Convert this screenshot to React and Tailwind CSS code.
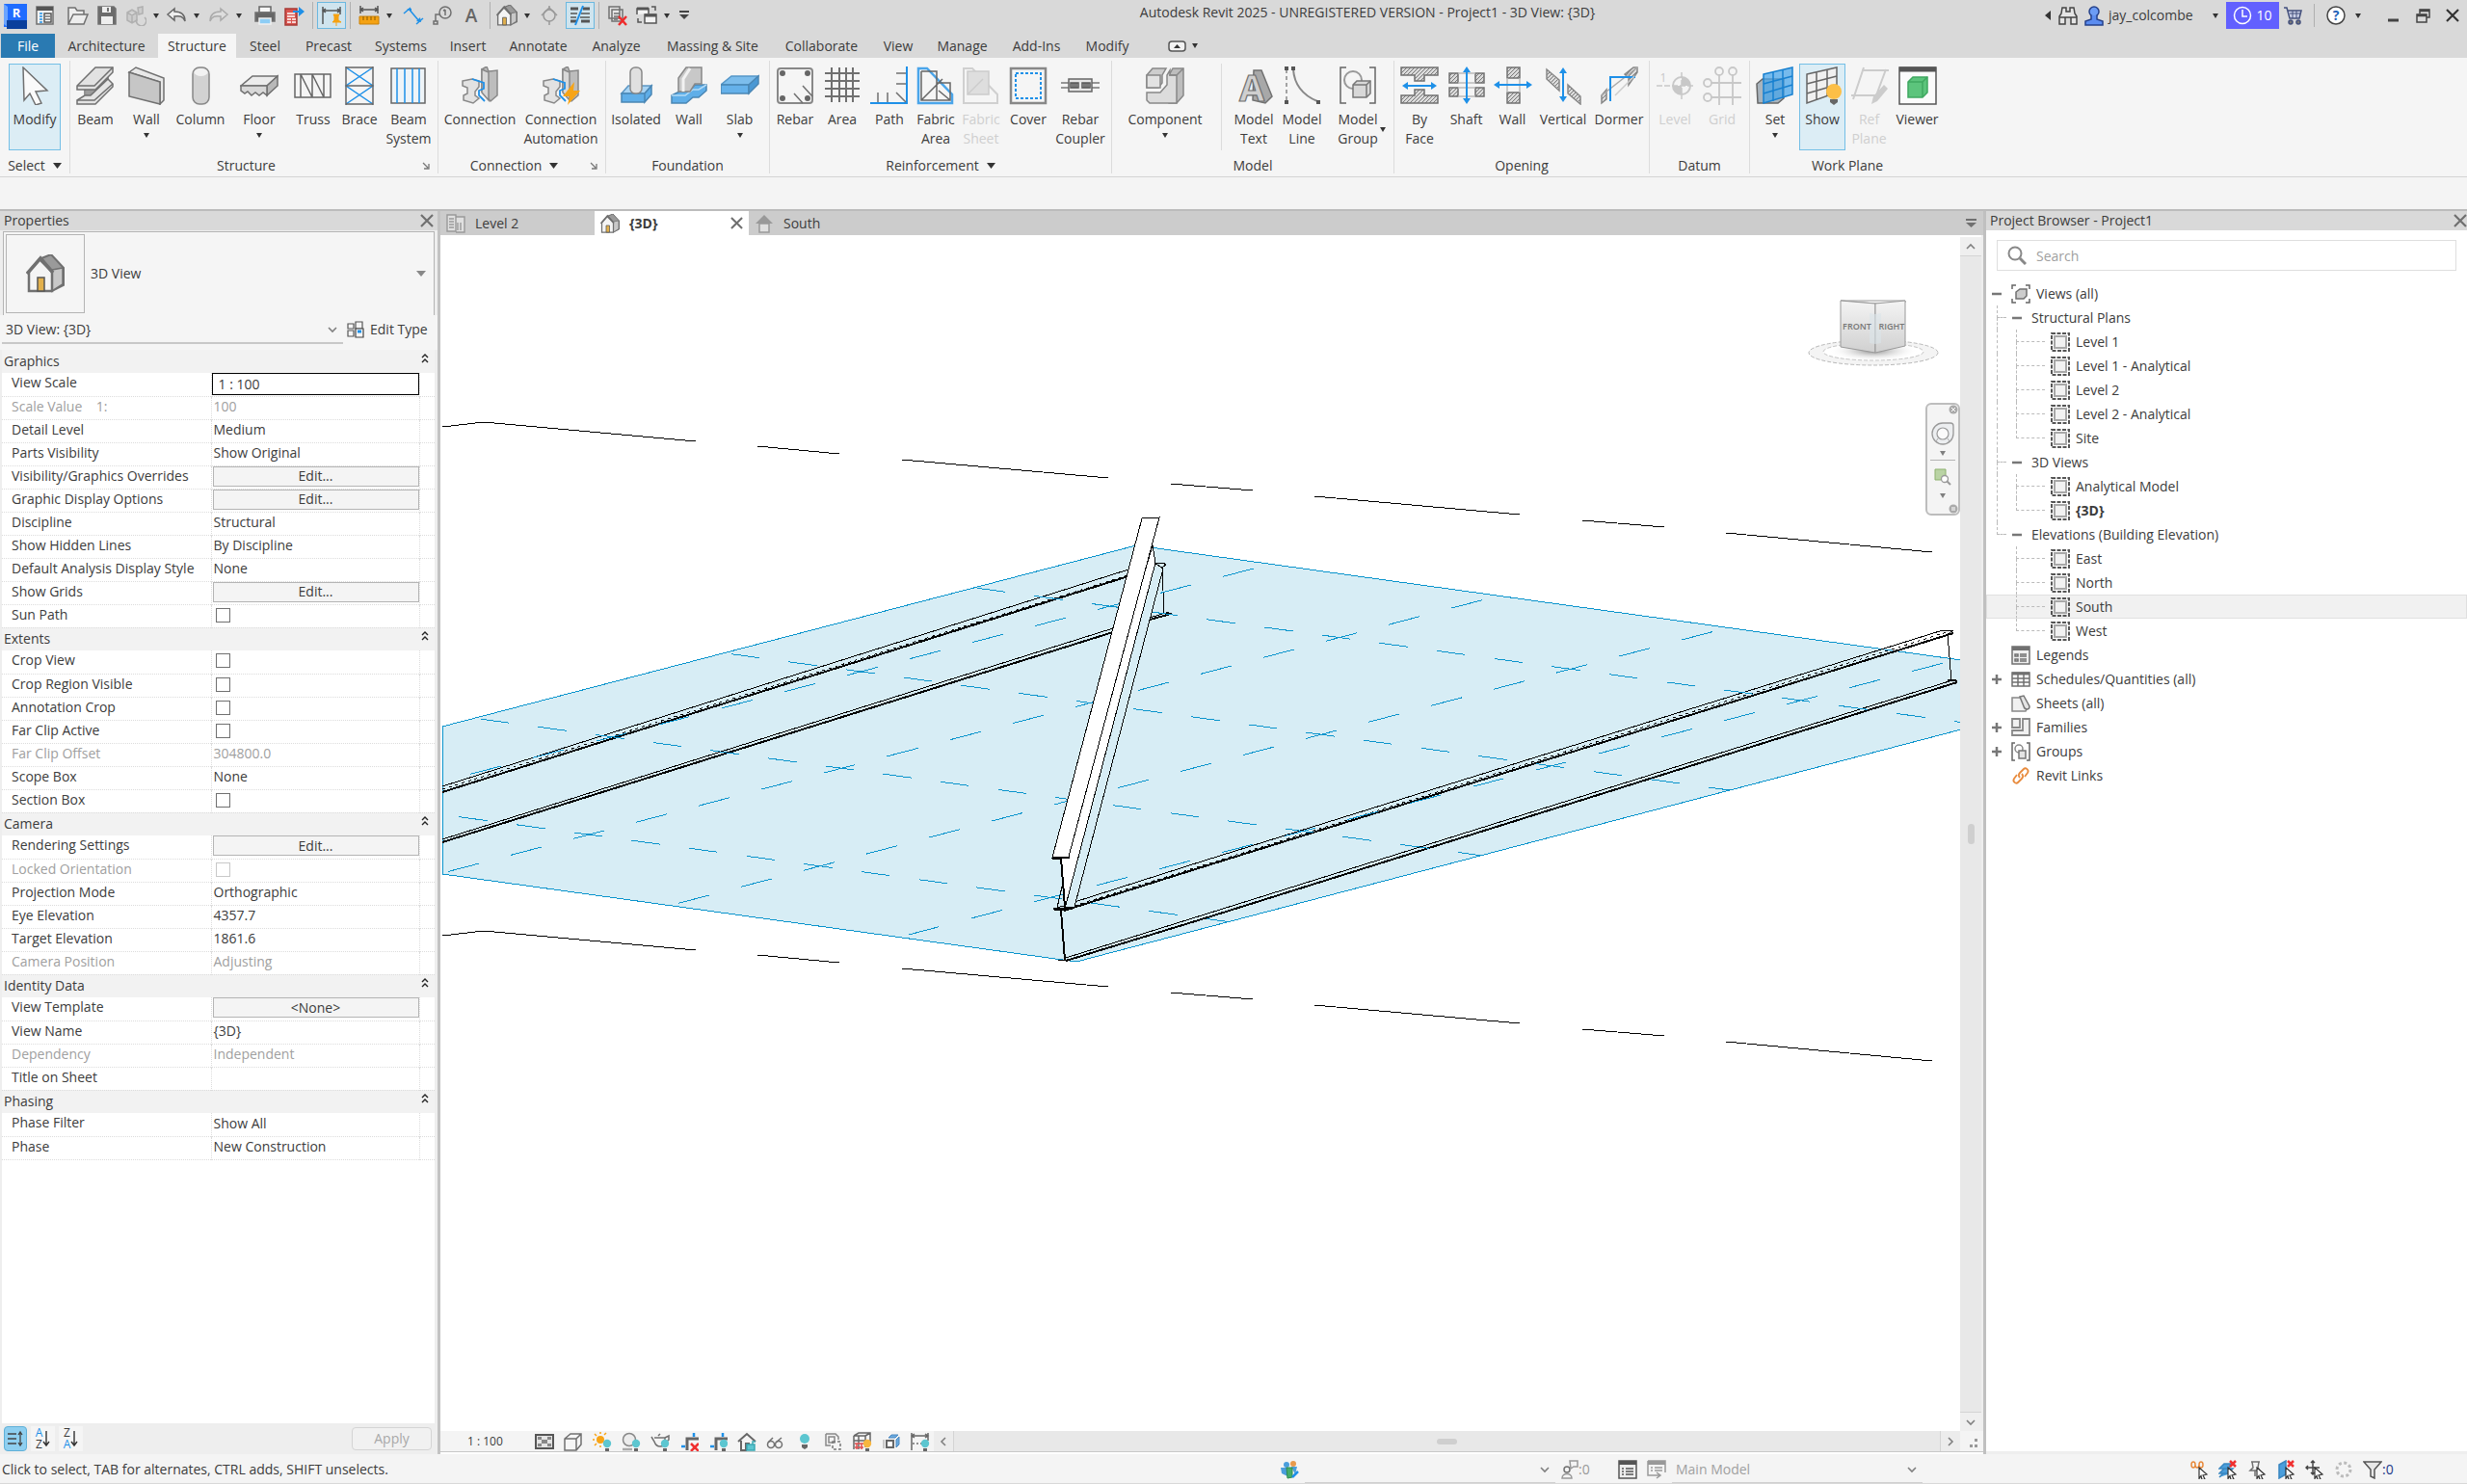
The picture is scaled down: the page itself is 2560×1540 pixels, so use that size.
import { useState } from 'react'
import clsx from 'clsx'

const G = '#707070'
const B = '#1e90e8'

function Ico({ w = 20, h = w, vb, children, className }) {
  return (
    <svg
      width={w}
      height={h}
      viewBox={vb || `0 0 ${w} ${h}`}
      fill="none"
      stroke={G}
      strokeWidth="1.5"
      className={clsx('block shrink-0', className)}
      aria-hidden="true"
    >
      {children}
    </svg>
  )
}

function Caret({ big, className }) {
  return (
    <Ico w={big ? 9 : 6} h={big ? 6 : 5} className={className}>
      {big ? <path d="M0 0h9L4.500 6z" fill="#333" stroke="none" /> : <path d="M0 0h6L3 5z" fill="#333" stroke="none" />}
    </Ico>
  )
}

function Cross({ size = 14 }) {
  return (
    <Ico w={size} vb="0 0 14 14">
      <path d="M1 1l12 12M13 1L1 13" stroke="#707070" strokeWidth="2.2" />
    </Ico>
  )
}

function Chevron({ d = 'M1 1l4 4 4-4' }) {
  return (
    <Ico w={10} h={10} vb="0 -2 10 10">
      <path d={d} stroke="#808080" strokeWidth="1.6" />
    </Ico>
  )
}

function House({ size = 22 }) {
  return (
    <Ico w={size} vb="0 0 40 40">
      <path d="M16 4L26 0 39 14v18l-12 6V18z" fill="#9a9a9a" strokeWidth="2" />
      <path d="M27 16l11-2v17l-11 7z" fill="#c8c8c8" strokeWidth="1.500" />
      <path d="M3 38V18L14 5l13 13v20z" fill="#f4f4f4" strokeWidth="2.500" />
      <path d="M1 20L15 4l13 15" strokeWidth="3.500" />
      <path d="M12 38V24h7v14z" fill="#e2b04c" stroke="#555" strokeWidth="1.500" />
    </Ico>
  )
}

function Bulb({ x = 13, y = 11, c = '#5cc6d0' }) {
  return (
    <g stroke="none">
      <circle cx={x} cy={y} r="4.200" fill={c} />
      <path d={`M${x - 2} ${y + 5}h4v3l-2 1-2-1z`} fill="#666" />
    </g>
  )
}

/* ---------- quick access toolbar ---------- */

const Q = {
  doc: <><path d="M2 2h17v18H2z" fill="#f2f2f2" /><path d="M2 4h17" strokeWidth="4" stroke="#555" /><path d="M5 9h3M5 12h3M5 15h3M5 18h3" stroke={B} /><path d="M10 9h7v9h-7z" fill="#fff" stroke="#555" /><path d="M11 12h5M11 15h5" /></>,
  open: <path d="M1 20V3h7l2 3h7v4M1 20L6 10h15l-4 10z" fill="#ededed" />,
  save: <><path d="M2 2h16l2 2v16H2z" fill="#6b6b6b" /><path d="M6 2h9v6H6zM5 12h12v8H5z" fill="#eee" stroke="none" /><path d="M12 3v4" strokeWidth="2" /></>,
  sync: <g stroke="#b0b0b0" fill="#ccc"><path d="M2 8l5-3 5 3v8l-5 3-5-3zM2 8l5 3 5-3M7 11v8" /><path d="M13 3l5-1v7l-4 1z" /><path d="M12 15a5 5 0 108-2" fill="none" /></g>,
  undo: <path d="M9 4L2 10l7 6v-4c6-1 9 0 11 5 0-7-4-10-11-10z" fill="#eee" stroke="#666" />,
  redo: <path d="M13 4l7 6-7 6v-4C7 11 4 12 2 17c0-7 4-10 11-10z" fill="#ddd" stroke="#aaa" />,
  print: <><path d="M5 2h12v6H5z" fill="#f6f6f6" stroke="#666" /><path d="M1 8h20v9H1z" fill="#666" /><path d="M5 14h12v6H5z" fill="#8dcdf5" stroke="#f0f0f0" /></>,
  pdf: <><path d="M2 4h12v17H2z" fill="#d9544f" stroke="#a83a36" /><path d="M4 9h8M4 12h8M4 15h4m1 0h4M4 18h4m1 0h4" stroke="#fff" /><path d="M10 6h6V2l6 5-6 5V8h-6z" fill={B} stroke="none" /></>,
  pin: <><path d="M2 2v18M20 2v8M2 6h18M5 4L2 6l3 2M17 4l3 2-3 2" stroke="#555" /><path d="M13 10h6l-1 2v4l3 2h-9l2-2v-4zM16 18v4" fill="#f5a213" stroke="#f5a213" strokeWidth="1" /></>,
  ruler: <><path d="M2 1v8M20 1v8M2 5h18M5 3L2 5l3 2M17 3l3 2-3 2" stroke="#555" /><path d="M1 12h20v8H1z" fill="#f5a213" stroke="#c98108" strokeWidth="1" /><path d="M5 12v4M9 12v4M13 12v4M17 12v4" stroke="#8a5a00" strokeWidth="1" /></>,
  align: <><path d="M6 4l11 13M1 9l7-6M14 20l7-6" stroke={B} /><path d="M4 4h5v3zM14 17l5 1-1-5z" fill={B} stroke="none" /></>,
  tag: <><circle cx="14" cy="8" r="6" /><path d="M14 5v6M12 6l2-1M8 10H4v7M2 17h4v3H2z" /></>,
  text: <text x="11" y="18" textAnchor="middle" fontSize="19" fontWeight="600" fill="#666" stroke="none" fontFamily="Open Sans, sans-serif">A</text>,
  section: <><path d="M11 1v20" stroke="#999" /><circle cx="11" cy="11" r="6" fill="#d9d9d9" stroke="#999" /><path d="M3 11l8-8 8 8" stroke="#999" /></>,
  thin: <><path d="M1 4h8M14 4h7M1 17h6M12 17h9" stroke="#555" strokeWidth="3" /><path d="M1 9h7M12 9h9M1 13h6M11 13h10" stroke="#555" /><path d="M14 1L6 21" stroke={B} strokeWidth="2" /></>,
  closeHidden: <><path d="M2 2h11v12H2zM5 5h11v12H5z" fill="#e6e6e6" /><path d="M7 9h6M7 12h6M7 15h4" /><path d="M12 12l8 9M20 12l-8 9" stroke="#ee2b2b" strokeWidth="2.500" /></>,
  switchWin: <><path d="M1 10V4h12v5M9 10h12v9H9z" fill="#f3f3f3" stroke="#555" /><path d="M1 4h12M9 11h12" stroke="#555" strokeWidth="3" /><path d="M16 2h4v4M6 18H2v-4" stroke="#555" /></>,
}

const QAT = [
  ['doc', 'New', 'ml-2'], ['open', 'Open', 'ml-3'], ['save', 'Save', 'ml-2'], ['sync', 'Synchronize', 'ml-2', 1],
  ['undo', 'Undo', 'ml-1', 1], ['redo', 'Redo', 'ml-1.5', 1], ['print', 'Print', 'ml-2.5'], ['pdf', 'Export PDF', 'ml-2'], ['sep', 's1', 'ml-2'],
  ['pin', 'Activate Dimensions', 'ml-1', 0, 1], ['sep', 's2', 'ml-1'], ['ruler', 'Measure', 'ml-2', 1], ['align', 'Aligned Dimension', 'ml-2'],
  ['tag', 'Tag by Category', 'ml-2'], ['text', 'Text', 'ml-2'], ['sep', 's3', 'ml-2'], ['house', 'Default 3D View', 'ml-1.5', 1],
  ['section', 'Section', 'ml-1.5'], ['thin', 'Thin Lines', 'ml-1.5', 0, 1], ['sep', 's4', 'ml-1'], ['closeHidden', 'Close Inactive Views', 'ml-2'],
  ['switchWin', 'Switch Windows', 'ml-2', 1],
]

function TitleBar() {
  return (
    <header className="flex h-[35px] items-start bg-[#d9d9d9]">
      <div className="flex h-8 items-center">
        <button aria-label="Revit home" className="ml-1">
          <Ico w={24} h={28}>
            <path d="M0 2h24v24H0z" fill="#1f6cff" stroke="none" />
            <path d="M0 2l4 3v21l-4-3z" fill="#6ba4ff" stroke="none" />
            <path d="M3 19h21v9H3z" fill="#0a3f9c" stroke="none" />
            <text x="13" y="16" textAnchor="middle" fontSize="13" fontWeight="700" fill="#fff" stroke="none" fontFamily="Open Sans, sans-serif">R</text>
          </Ico>
        </button>
        {QAT.map(([id, label, gap, menu, on]) =>
          id === 'sep' ? (
            <span key={label} className={clsx('h-7 w-px bg-[#b0b0b0]', gap)} />
          ) : (
            <span key={label} className={clsx('flex items-center', gap)}>
              <button aria-label={label} className={clsx(on && 'border border-[#6bb8e0] bg-[#cfe4ee] px-[3px] py-[2px]')}>
                {id === 'house' ? <House /> : <Ico w={22}>{Q[id]}</Ico>}
              </button>
              {menu ? <button aria-label={`${label} options`} className="ml-1 flex w-3 justify-center"><Caret /></button> : null}
            </span>
          )
        )}
        <button aria-label="Customize" className="ml-1.5">
          <Ico w={12} h={10}><path d="M1 1h10" stroke="#444" strokeWidth="2" /><path d="M1 4h10L6 9z" fill="#444" stroke="none" /></Ico>
        </button>
      </div>

      <h1 className="flex-1 pt-[3px] text-center text-sm leading-5">Autodesk Revit 2025 - UNREGISTERED VERSION - Project1 - 3D View: {'{3D}'}</h1>

      <div className="flex h-8 items-center">
        <button aria-label="Collapse search"><Ico w={6} h={10}><path d="M6 0v10L0 5z" fill="#333" stroke="none" /></Ico></button>
        <button aria-label="Search" className="ml-2">
          <Ico w={20}><path d="M3 8l1-6h4v4h4V2h4l1 6 2 3v8h-6v-7H7v7H1v-8zM1 12h6M13 12h6" fill="#e4e4e4" stroke="#444" /></Ico>
        </button>
        <button className="ml-1.5 flex items-center gap-1 text-sm">
          <Ico w={22}><circle cx="11" cy="7" r="5" fill="#6c9cf5" stroke="#25408a" /><path d="M8 11v4l-6 2v4h18v-4l-6-2v-4" fill="#5b8cf0" stroke="#25408a" /></Ico>
          <span className="w-[104px] text-left">jay_colcombe</span>
          <Caret />
        </button>
        <button className="ml-2 flex h-7 w-[55px] items-center justify-center gap-1 bg-[#6260ff] text-sm text-white">
          <Ico w={20}><circle cx="10" cy="10" r="8.500" stroke="#fff" /><path d="M10 4v7h5" stroke="#fff" /></Ico>
          10
        </button>
        <button aria-label="App store" className="ml-1">
          <Ico w={20}><path d="M1 2h3l3 11h10l2-8H5" fill="#c9cfe6" stroke="#44507c" /><path d="M7 8h11M10 5v8M14 5v8" stroke="#44507c" strokeWidth="1" /><circle cx="8" cy="17" r="2" fill="#777" stroke="#44507c" /><circle cx="16" cy="17" r="2" fill="#777" stroke="#44507c" /></Ico>
        </button>
        <span className="ml-3 h-6 w-px bg-[#b0b0b0]" />
        <button aria-label="Help" className="ml-3">
          <Ico w={20}><circle cx="10" cy="10" r="9" fill="#fff" stroke="#444" /><text x="10" y="15" textAnchor="middle" fontSize="14" fontWeight="700" fill="#2563b8" stroke="none">?</text></Ico>
        </button>
        <Caret className="ml-2.5" />
        <button aria-label="Minimize" className="ml-7"><Ico w={11} h={14}><path d="M0 12h11" stroke="#444" strokeWidth="3" /></Ico></button>
        <button aria-label="Restore" className="ml-[18px]"><Ico w={15}><path d="M4 5V1h10v8h-3M1 6h10v8H1z" stroke="#444" /><path d="M4 2h10M1 7h10" stroke="#444" strokeWidth="2.500" /></Ico></button>
        <button aria-label="Close" className="mr-2 ml-4"><Ico w={14}><path d="M1 1l12 12M13 1L1 13" stroke="#333" strokeWidth="2.200" /></Ico></button>
      </div>
    </header>
  )
}

/* ---------- ribbon ---------- */

const TABS = [
  ['Architecture', 'w-[107px]'], ['Structure', 'w-[81px]'], ['Steel', 'w-[60px]'], ['Precast', 'w-[72px]'], ['Systems', 'w-[78px]'],
  ['Insert', 'w-[61px]'], ['Annotate', 'w-[85px]'], ['Analyze', 'w-[77px]'], ['Massing & Site', 'w-[123px]'], ['Collaborate', 'w-[103px]'],
  ['View', 'w-[56px]'], ['Manage', 'w-[77px]'], ['Add-Ins', 'w-[77px]'], ['Modify', 'w-[70px]'],
]

const H = 'url(#hatch)'

const R = {
  modify: <path d="M8 1l25 24-12 1 6 12-6 2-6-12-6 7z" fill="#fafafa" />,
  beam: <><path d="M9 29V20l20-17h4v10L15 33z" fill="#9c9c9c" /><path d="M20 1h18v5L20 24H1v-4z" fill="#e2e2e2" /><path d="M1 20h18L38 1" /><path d="M10 25v7M15 25v6" stroke="#999" /><path d="M15 30L33 13l5 5v3L20 39H1v-4l8-5z" fill="#e4e4e4" /><path d="M1 35h18l19-17" /></>,
  wall: <><path d="M2 6l7-5 29 11v23l-4 4V16z" fill="#e8e8e8" /><path d="M2 6v25l32 8V16z" fill="#c6c6c6" /></>,
  column: <><rect x="12" y="1" width="17" height="38" rx="7" fill="#d2d2d2" stroke="#888" /><ellipse cx="20.500" cy="6" rx="7" ry="4" fill="#f2f2f2" stroke="none" /></>,
  floor: <><path d="M1 20l12-10h26L28 20z" fill="#ececec" /><path d="M28 20l11-10v10L28 30z" fill="#b8b8b8" /><path d="M1 20h27v10l-4-3-4 3-4-3-4 3-4-4-3 2-4-3z" fill="#d8d8d8" /></>,
  truss: <path d="M1 8h37v24H1zM7 8v24M7 8l12 24V8l12 24V8" stroke="#666" />,
  brace: <><path d="M6 1l28 19L6 39M34 1L6 20l28 19" stroke={B} /><path d="M6 0v40M34 0v40M6 1h28M6 20h28M6 39h28" stroke="#666" /></>,
  beamSystem: <><path d="M2 2h35v36H2z" fill="#eef4f8" stroke="#666" /><path d="M8 2v36M16 2v36M24 2v36M31 2v36" stroke={B} /></>,
  connection: <><path d="M22 3l5-3 2 5 9-1v26l-7 6-9-10z" fill="#bdbdbd" stroke="#888" /><path d="M22 3v24l7 8V6z" fill="#d8d8d8" stroke="#888" /><path d="M2 15l10-2 7 2v6l-4 5v4l4 3-6 5-10-3v-5l4-2v-6l-5-2z" fill="#e2e2e2" stroke="#888" /><path d="M12 13l12 4v6l-5 2v5l6 6" stroke={B} strokeWidth="1.800" /></>,
  isolated: <><path d="M5 28l7-8h24l-7 8z" fill="#a8d4f4" stroke="#5c97c4" /><path d="M5 28h24v9H5zM29 28l7-8v9l-7 8z" fill="#5faee8" stroke="#4a86b4" /><rect x="14" y="1" width="12" height="27" rx="5" fill="#e0e0e0" stroke="#888" /></>,
  wallFound: <><path d="M2 30l8-4h10l6-7h12v6l-8 7h-6l-7 6H2z" fill="#5faee8" stroke="#4a86b4" /><path d="M2 30h14l8-6h6l8-5" stroke="#b4dbf6" /><path d="M9 26V12l8-11h16v17h-7l-5 8z" fill="#c8c8c8" stroke="#888" /><path d="M14 26V13l7-11" stroke="#f2f2f2" strokeWidth="3" /></>,
  slab: <><path d="M0 19l11-9h28l-10 9z" fill="#7cbdec" stroke="#5597c8" /><path d="M0 19h29v9H0z" fill="#65b1ea" stroke="#4a86b4" /><path d="M29 19l10-9v8L29 28z" fill="#4a98d4" stroke="#4a86b4" /></>,
  rebar: <><rect x="2" y="2" width="36" height="36" rx="3" stroke="#888" strokeWidth="2" /><g fill="#666" stroke="none"><circle cx="7" cy="7" r="3" /><circle cx="33" cy="7" r="3" /><circle cx="7" cy="33" r="3" /><circle cx="33" cy="33" r="3" /></g><path d="M19 28l9 10M28 20l10 11" /></>,
  area: <path d="M9 1v36M17 1v36M24 1v36M31 1v36M2 7h36M2 15h36M2 23h36M2 31h36" strokeWidth="2" />,
  path: <><path d="M38 0v39M0 38h38" stroke={B} strokeWidth="2" /><path d="M27 7h10M27 18h10M8 27v10M18 27v10M27 27l10 10" /></>,
  fabric: <><path d="M2 2h9l26 27v9H2z" stroke="#4aa5ea" strokeWidth="2.500" /><path d="M5 5v30h30V17h-14M5 5h16v12M5 35l22-22M21 17v18M23 25l12 10" stroke="#666" /></>,
  sheet: <><path d="M2 2h9l26 27v9H2z" stroke="#d0d0d0" strokeWidth="2" /><path d="M6 5h22v24H6z" fill="#dedede" stroke="#ccc" /><path d="M6 29l16-16" stroke="#ccc" /></>,
  cover: <><path d="M2 2h36v36H2z" stroke="#888" strokeWidth="2.500" /><path d="M7 7h26v26H7z" stroke={B} strokeWidth="2" strokeDasharray="3 2" /></>,
  coupler: <><path d="M0 17h40M0 22h40" stroke="#777" /><path d="M8 13h24v13H8z" fill="#e6e6e6" stroke="#666" /><path d="M10 17h8v5h-8zM22 17h8v5h-8zM12 17v5M14 17v5M16 17v5M24 17v5M26 17v5M28 17v5" stroke="#555" /></>,
  component: (
    <>
      <path d="M1 9l6-7h14l-4 7v8L13 22H1z" fill="#cdcdcd" stroke="#888" />
      <path d="M1 9h14v13H1z" fill="#e2e2e2" stroke="#888" />
      <path d="M24 9l4-7h11v28l-7 8h-8z" fill="#bdbdbd" stroke="#888" />
      <path d="M1 27h14l7-8V9l3-5v5h7v29H4l-3-3z" fill="#dcdcdc" stroke="#888" />
      <path d="M32 9l7-7M24 9h8" stroke="#888" />
    </>
  ),
  modelText: (
    <>
      <path d="M20 4h8l11 27-7 7-13-3z" fill="#a8a8a8" stroke="#707070" />
      <text x="18" y="36" textAnchor="middle" fontSize="38" fontWeight="700" fill="#cfcfcf" stroke="#707070" strokeWidth="1.200" fontFamily="Open Sans, sans-serif">A</text>
    </>
  ),
  modelLine: <><path d="M4 3v33" strokeDasharray="4 3" stroke="#888" /><path d="M11 3c1 14 8 26 25 33" stroke="#888" strokeWidth="2" /><path d="M2 0h4v4H2zM9 0h4v4H9zM2 35h4v4H2zM35 35h4v4h-4z" fill="#555" stroke="none" /></>,
  modelGroup: <><path d="M8 1H2v37h6M32 1h6v37h-6" stroke="#666" /><circle cx="15" cy="14" r="9" stroke="#999" strokeWidth="2" /><path d="M15 19l4-4h14v13l-4 4H15z" fill="#d8d8d8" stroke="#777" /><path d="M15 19h14v13M29 19l4-4" stroke="#777" /></>,
  byFace: <><path d="M1 1h38v8H25v6H15V9H1zM1 38h38v-8H25v-6H15v6H1z" fill={H} /><path d="M7 20h26" stroke={B} strokeWidth="2" /><path d="M2 20l6-4v8zM38 20l-6-4v8z" fill={B} stroke="none" /></>,
  shaft: <><path d="M2 7h9v10H2zM29 7h9v10h-9zM2 22h9v9H2zM29 22h9v9h-9z" fill={H} /><path d="M11 7h18M11 17h18M11 22h18M11 31h18" stroke="#bbb" /><path d="M20 3v34" stroke={B} strokeWidth="2" /><path d="M20 0l-4 6h8zM20 39l-4-6h8z" fill={B} stroke="none" /></>,
  wallOpen: <><path d="M14 1h13v11H14zM14 27h13v11H14z" fill={H} /><path d="M14 12v15M27 12v15" stroke="#bbb" /><path d="M4 19h32" stroke={B} strokeWidth="2" /><path d="M0 19l6-4v8zM40 19l-6-4v8z" fill={B} stroke="none" /></>,
  vertical: <><path d="M3 3l13 11v11L3 13zM25 19l13 12v8L25 28z" fill={H} stroke="#888" /><path d="M20 4v30" stroke={B} strokeWidth="2" /><path d="M20 1l-4 6h8zM20 37l-4-6h8z" fill={B} stroke="none" /></>,
  dormer: <><path d="M2 38v-8l5-6v10zM26 8l9-7h4v5L30 19v-7z" fill={H} stroke="#888" /><path d="M39 1L2 30" stroke="#aaa" /><path d="M11 36V11h26" stroke={B} strokeWidth="2" /><path d="M16 30L36 10" stroke="#ccc" /></>,
  level: <g stroke="#c8c8c8"><circle cx="27" cy="20" r="9" strokeWidth="2" /><path d="M27 11v9h9a9 9 0 00-9-9zM27 29v-9h-9a9 9 0 009 9z" fill="#c8c8c8" stroke="none" /><path d="M27 6v28M1 20h38" strokeDasharray="6 2" /><text x="8" y="16" textAnchor="middle" fontSize="12" fill="#c8c8c8" stroke="none">1</text></g>,
  grid: <g stroke="#c8c8c8" strokeWidth="1.800"><circle cx="17" cy="5" r="4" /><circle cx="31" cy="5" r="4" /><circle cx="5" cy="17" r="4" /><circle cx="5" cy="32" r="4" /><path d="M17 9v31M31 9v31M9 17h31M9 32h31" /></g>,
  set: <><path d="M1 18l6-5h22v20l-6 5H2z" fill="#a9b4bd" stroke="#666" /><path d="M8 8L38 1v28L8 38z" fill="#4aa5ea" fillOpacity=".75" stroke="#1780d0" /><path d="M18 6v30M28 3v30M8 18l30-8M8 28l30-9" stroke="#1780d0" /></>,
  show: <><path d="M4 8L35 1v26L4 38zM14 5v30M25 3v27M4 18l31-8M4 28l31-9" stroke="#666" fill="#f0f0f0" /><circle cx="32" cy="26" r="8" fill="#fcbf47" stroke="none" /><path d="M28 34h8v3l-4 3-4-3z" fill="#666" stroke="none" /></>,
  refPlane: <><path d="M12 4h28M1 30h26M14 1L3 34M37 3L27 30" stroke="#ccc" strokeWidth="2" /><path d="M22 39l2-8 11-12 4 4-11 13z" fill="#ccc" stroke="none" /></>,
  viewer: <><path d="M1 1h38v38H1z" fill="#fbfbfb" stroke="#555" /><path d="M1 3h38" stroke="#555" strokeWidth="5" /><path d="M10 16l5-5h15v16l-5 5H10z" fill="#5cc47c" stroke="#3fa860" /><path d="M10 16h15v16M25 16l5-5" stroke="#3fa860" /></>,
}

R.connAuto = <>{R.connection}<path d="M34 16L22 31h7l-2 9 13-15h-7z" fill="#f7a416" stroke="none" /></>

// [title, panel width, buttons, has menu, has dialog launcher]
// button: [icon, label, width, arrow, state]
const PANELS = [
  ['Structure', 'w-[382px]', [['beam', 'Beam', 'w-[50px]'], ['wall', 'Wall', 'w-[56px]', 1], ['column', 'Column', 'w-[56px]'], ['floor', 'Floor', 'w-[66px]', 1], ['truss', 'Truss', 'w-[46px]'], ['brace', 'Brace', 'w-[50px]'], ['beamSystem', 'Beam\nSystem', 'w-[52px]']], 0, 1],
  ['Connection', 'w-[174px]', [['connection', 'Connection', 'w-[84px]'], ['connAuto', 'Connection\nAutomation', 'w-[84px]']], 1, 1],
  ['Foundation', 'w-[170px]', [['isolated', 'Isolated', 'w-[60px]'], ['wallFound', 'Wall', 'w-[50px]'], ['slab', 'Slab', 'w-[55px]', 1]]],
  ['Reinforcement', 'w-[355px]', [['rebar', 'Rebar', 'w-[50px]'], ['area', 'Area', 'w-[48px]'], ['path', 'Path', 'w-[50px]'], ['fabric', 'Fabric\nArea', 'w-[46px]'], ['sheet', 'Fabric\nSheet', 'w-[48px]', 0, 'off'], ['cover', 'Cover', 'w-[50px]'], ['coupler', 'Rebar\nCoupler', 'w-[58px]']], 1],
  ['Model', 'w-[293px]', [['component', 'Component', 'w-[108px]', 1], ['sep'], ['modelText', 'Model\nText', 'w-[50px]'], ['modelLine', 'Model\nLine', 'w-[50px]'], ['modelGroup', 'Model\nGroup', 'w-[66px]', 2]]],
  ['Opening', 'w-[265px]', [['byFace', 'By\nFace', 'w-[50px]'], ['shaft', 'Shaft', 'w-[47px]'], ['wallOpen', 'Wall', 'w-[49px]'], ['vertical', 'Vertical', 'w-[56px]'], ['dormer', 'Dormer', 'w-[60px]']]],
  ['Datum', 'w-[104px]', [['level', 'Level', 'w-[50px]', 0, 'off'], ['grid', 'Grid', 'w-[48px]', 0, 'off']]],
  ['Work Plane', 'w-[202px]', [['set', 'Set', 'w-[50px]', 1], ['show', 'Show', 'w-[48px]', 0, 'on'], ['refPlane', 'Ref\nPlane', 'w-[49px]', 0, 'off'], ['viewer', 'Viewer', 'w-[51px]']]],
]

function RibbonButton({ item }) {
  const [icon, label, width, arrow, state] = item
  return (
    <button
      disabled={state === 'off'}
      className={clsx(
        'flex h-[90px] shrink-0 flex-col items-center border pt-[2px] text-sm leading-5 whitespace-pre',
        width,
        state === 'on' ? 'border-[#74bfe6] bg-[#dcedf5]' : 'border-transparent',
        state === 'off' && 'text-[#cfcfcf]'
      )}
    >
      <Ico w={40}>{R[icon]}</Ico>
      <span className="flex items-center pt-[5px]">
        {arrow === 2 ? <span className="w-2" /> : null}
        {label}
        {arrow === 2 ? <Caret className="ml-0.5" /> : null}
      </span>
      {arrow === 1 ? <Caret className="mt-1" /> : null}
    </button>
  )
}

function Ribbon() {
  const [tab, setTab] = useState('Structure')
  return (
    <>
      <svg className="absolute h-0 w-0" aria-hidden="true">
        <pattern id="hatch" width="4" height="4" patternUnits="userSpaceOnUse">
          <path d="M0 0h4v4H0z" fill="#dadada" />
          <path d="M0 4l4-4" stroke="#777" strokeWidth="1" />
        </pattern>
      </svg>
      <nav className="flex h-[25px] bg-[#d9d9d9] text-sm">
        <button className="ml-px w-14 bg-[#2a7ab2] text-white">File</button>
        {TABS.map(([name, width]) => (
          <button key={name} onClick={() => setTab(name)} className={clsx('whitespace-nowrap', width, tab === name && 'bg-[#f5f5f5]')}>
            {name}
          </button>
        ))}
        <button aria-label="Minimize ribbon" className="ml-7 flex items-center gap-1.5">
          <Ico w={19} h={12}><rect x="1" y="1" width="17" height="10" rx="3" fill="#f2f2f2" stroke="#555" /><path d="M6 8h7L9.500 4z" fill="#333" stroke="none" /></Ico>
          <Caret />
        </button>
      </nav>
      <section className="flex h-[124px] border-b border-[#d4d4d4] bg-[#f5f5f5] text-sm">
        <Panel title="Select" width="w-[73px]" menu>
          <span className="w-2" />
          <RibbonButton item={['modify', 'Modify', 'w-[54px]', 0, 'on']} />
        </Panel>
        {PANELS.map(([title, width, items, menu, launcher]) => (
          <Panel key={title} title={title} width={width} menu={menu} launcher={launcher}>
            {items.map((it, i) =>
              it[0] === 'sep' ? <span key={i} className="mr-2 ml-1 w-px bg-[#dcdcdc]" /> : <RibbonButton key={i} item={it} />
            )}
          </Panel>
        ))}
      </section>
      <div className="h-[35px] shrink-0 border-b-2 border-[#bcbcbc] bg-[#f4f4f4]" />
    </>
  )
}

function Panel({ title, width, menu, launcher, children }) {
  return (
    <div className={clsx('my-[3px] flex shrink-0 flex-col border-[#dcdcdc] pt-[3px]', width, title !== 'Work Plane' && 'border-r')}>
      <div className="flex h-[90px] pl-px">{children}</div>
      <div className="flex flex-1 items-center pt-1.5">
        <span className="flex flex-1 items-center justify-center gap-2">
          {title}
          {menu ? <Caret big /> : null}
        </span>
        {launcher ? (
          <button aria-label={`${title} settings`} className="w-4">
            <Ico w={8}><path d="M1 1l5 5M7 2v5H2" stroke="#777" strokeWidth="1.300" /></Ico>
          </button>
        ) : null}
      </div>
    </div>
  )
}

/* ---------- properties palette ---------- */

const PROPS = [
  ['Graphics', [
    ['View Scale', '1 : 100', 'input'], ['Scale Value    1:', '100', 'off'], ['Detail Level', 'Medium'], ['Parts Visibility', 'Show Original'],
    ['Visibility/Graphics Overrides', 'Edit...', 'button'], ['Graphic Display Options', 'Edit...', 'button'], ['Discipline', 'Structural'],
    ['Show Hidden Lines', 'By Discipline'], ['Default Analysis Display Style', 'None'], ['Show Grids', 'Edit...', 'button'], ['Sun Path', '', 'check'],
  ]],
  ['Extents', [
    ['Crop View', '', 'check'], ['Crop Region Visible', '', 'check'], ['Annotation Crop', '', 'check'], ['Far Clip Active', '', 'check'],
    ['Far Clip Offset', '304800.0', 'off'], ['Scope Box', 'None'], ['Section Box', '', 'check'],
  ]],
  ['Camera', [
    ['Rendering Settings', 'Edit...', 'button'], ['Locked Orientation', '', 'checkOff'], ['Projection Mode', 'Orthographic'],
    ['Eye Elevation', '4357.7'], ['Target Elevation', '1861.6'], ['Camera Position', 'Adjusting', 'off'],
  ]],
  ['Identity Data', [
    ['View Template', '<None>', 'button'], ['View Name', '{3D}'], ['Dependency', 'Independent', 'off'], ['Title on Sheet', ''],
  ]],
  ['Phasing', [['Phase Filter', 'Show All'], ['Phase', 'New Construction']]],
]

function PropRow({ name, value, kind }) {
  const id = name.toLowerCase().replace(/[^a-z]+/g, '-')
  const off = kind === 'off' || kind === 'checkOff'
  return (
    <tr className={clsx('h-6 border-b border-dotted border-[#dcdcdc]', off && 'text-[#a0a0a0]')}>
      <th scope="row" className="border-r border-dotted border-[#dcdcdc] p-0 pb-[3px] pl-2.5 text-left font-normal whitespace-pre">
        <label htmlFor={id}>{name}</label>
      </th>
      <td className={clsx('border-r border-dotted border-[#dcdcdc] p-0', kind !== 'input' && 'pb-0.5')}>
        {kind === 'input' && <input id={id} defaultValue={value} className="block h-[23px] w-full border border-black bg-white px-1.5" />}
        {kind === 'button' && (
          <button id={id} className="mx-px block h-[21px] w-[214px] border border-[#b4b4b4] bg-[#f4f4f4] leading-4">{value}</button>
        )}
        {(kind === 'check' || kind === 'checkOff') && (
          <input
            id={id}
            type="checkbox"
            disabled={off}
            className={clsx('ml-1 block size-[15px] appearance-none border bg-white checked:bg-[#5aa9d6]', off ? 'border-[#c8c8c8]' : 'border-[#707070]')}
          />
        )}
        {(!kind || kind === 'off') && <output id={id} className="block pl-0.5">{value}</output>}
      </td>
      <td className="p-0" />
    </tr>
  )
}

function Properties() {
  return (
    <aside className="flex w-[457px] shrink-0 flex-col border-r-3 border-[#c3c3c3] bg-[#eeeeee]">
      <div className="flex h-5 items-center justify-between bg-[#d9d9d9] pr-1 pl-1 text-sm">
        <h2>Properties</h2>
        <button aria-label="Close properties"><Cross /></button>
      </div>
      <button className="mx-[3px] mt-px flex h-[87px] items-center border border-b-0 border-[#b4b4b4] bg-[#f5f5f5] pr-2 pl-0.5 text-sm">
        <span className="grid size-[82px] place-items-center border border-[#b4b4b4]"><House size={40} /></span>
        <span className="flex-1 pl-1.5 text-left">3D View</span>
        <Ico w={10} h={6}><path d="M0 0h10L5 6z" fill="#888" stroke="none" /></Ico>
      </button>
      <div className="flex h-[36px] items-start bg-[#f5f5f5] text-sm">
        <div className="ml-0.5 flex h-[30px] w-[354px] items-center border-b-2 border-[#c8c8c8] pt-0.5 pr-1.5">
          <select aria-label="Instance" className="flex-1 appearance-none bg-transparent pl-1">
            <option>3D View: {'{3D}'}</option>
          </select>
          <Chevron />
        </div>
        <button className="ml-1 flex h-[30px] items-center gap-1.5">
          <Ico w={18}><path d="M1 3h6v5H1zM9 1h7v7H9zM1 10h6v6H1z" fill="#f5f5f5" stroke="#555" strokeWidth="1.200" /><path d="M9 8h8v9H9z" fill="#f5f5f5" stroke="#444" strokeWidth="1.200" /><path d="M11 11h4" stroke={B} strokeWidth="3" /></Ico>
          Edit Type
        </button>
      </div>
      <div className="mr-[3px] ml-0.5 flex-1 overflow-hidden bg-white">
        <table className="w-full table-fixed border-collapse text-sm leading-5">
          <colgroup>
            <col className="w-[217px]" />
            <col className="w-[216px]" />
            <col />
          </colgroup>
          {PROPS.map(([group, rows]) => (
            <tbody key={group}>
              <tr className="h-6 bg-[#f2f2f2]">
                <th colSpan={2} scope="rowgroup" className="p-0 pl-0.5 text-left font-normal">{group}</th>
                <td className="p-0">
                  <button aria-label={`Collapse ${group}`} className="ml-0.5 block">
                    <Ico w={8} h={12} className="mb-1.5"><path d="M1 5l3-3 3 3M1 10l3-3 3 3" stroke="#222" strokeWidth="1.400" /></Ico>
                  </button>
                </td>
              </tr>
              {rows.map(([name, value, kind]) => <PropRow key={name} name={name} value={value} kind={kind} />)}
            </tbody>
          ))}
        </table>
      </div>
      <div className="flex h-8 items-center gap-1 pl-1 text-xs">
        <button aria-label="Sort by group" className="grid h-[26px] w-6 place-items-center rounded border border-[#5fb0d8] bg-[#8ecff0]">
          <Ico w={18}><path d="M1 4h9M1 9h9M1 14h9M14 2v14M12 5l2-3 2 3M12 13l2 3 2-3" stroke="#444" strokeWidth="1.300" /></Ico>
        </button>
        {['AZ', 'ZA'].map(k => (
          <button key={k} aria-label={`Sort ${k}`} className="flex h-[26px] w-[25px] items-center justify-center bg-[#f5f5f5] leading-3">
            <span className="flex flex-col">
              <span className={k === 'AZ' ? 'text-[#1e90e8]' : ''}>{k[0]}</span>
              <span className={k === 'ZA' ? 'text-[#1e90e8]' : ''}>{k[1]}</span>
            </span>
            <Ico w={8} h={18}><path d="M4 1v15M1 12l3 4 3-4" stroke="#333" strokeWidth="1.400" /></Ico>
          </button>
        ))}
        <button disabled className="mr-1.5 ml-auto h-6 w-[83px] rounded border border-[#d4d4d4] bg-[#f1f1f1] text-sm text-[#a8a8a8]">Apply</button>
      </div>
    </aside>
  )
}

/* ---------- drawing area ---------- */

const PLANE = '459,754 1179,566 2035,685 2035,757 1117,998 459,907'
const CROSS_A = [[1148, 628.6], [893, 697], [633, 764.5], [610.5, 866]]
const CROSS_B = [[893, 697], [1130, 729.8], [1369, 762.7], [1607.7, 795.4]]

function Model() {
  return (
    <svg viewBox="457 244 1577 1241" preserveAspectRatio="xMidYMid slice" className="block h-full w-full" shapeRendering="crispEdges" fill="none">
      <clipPath id="plane"><polygon points={PLANE} /></clipPath>
      {[0, 528].map(dy => (
        <path
          key={dy}
          transform={`translate(0 ${dy})`}
          stroke="#000"
          d="M459 443L502 438L722 458M786 463L871 471M936 477L1150 496M1215 502L1300 509M1364 515L1577 534M1642 540L1727 547M1791 553L2005 573"
        />
      ))}
      <polygon points={PLANE} fill="#d7edf5" stroke="#0a94cc" />

      <g stroke="#000">
        <path d="M459 816L1171 591" />
        <path d="M459 819L1180 594" strokeDasharray="3 4" />
        <path d="M459 822L1171 598" strokeWidth="2" />
        <path d="M459 871L1155 652M1193 641L1213 635" />
        <path d="M459 874L1155 656M1193 643L1215 637" strokeWidth="2" />
        <path d="M1198 584h9l3 2-4 3h-7zM1206 590L1208 636M1202 636h14" />
      </g>

      <g stroke="#000">
        <path d="M1112 937L1250 893L2016 654h11l-4 3" />
        <path d="M1108 942L2020 656" strokeDasharray="3 4" />
        <path d="M1104 945L1250 899L2027 657" strokeWidth="2" />
        <path d="M1106 994L1250 949L2026 706" />
        <path d="M1106 997L1250 953L2031 708" strokeWidth="2" />
        <path d="M2021 657L2025 707" />
        <path d="M2021 706h8l2 2" strokeWidth="2" />
      </g>

      <g stroke="#0a94cc" clipPath="url(#plane)">
        {CROSS_A.map(([x, y]) => (
          <path key={y} d={`M${x - 1207.85} ${y - 164.8}L${x + 1500} ${y + 204.6}`} strokeDasharray="29.8 30.4" />
        ))}
        {CROSS_B.map(([x, y]) => (
          <path key={y} d={`M${x - 1316} ${y + 345.6}L${x + 1300} ${y - 341.3}`} strokeDasharray="33 34.3" />
        ))}
      </g>

      <g stroke="#000">
        <path d="M1101 945L1105 996" strokeWidth="2" />
        <path d="M1094 944h13l8-4h-13zM1098 996h12" />
        <path d="M1093 943h20" strokeWidth="2" />
        <path d="M1198 584L1207 590L1115 941L1105 942z" fill="#d7edf5" />
        <path d="M1196 566L1199 584L1105 943L1101 891z" fill="#fff" />
        <path d="M1103 916L1097 942" />
        <path d="M1185 538L1203 537L1109 889L1092 890z" fill="#fff" />
        <path d="M1092 891L1110 890M1101 891L1105 941" strokeWidth="2" />
      </g>
    </svg>
  )
}

function ViewCube() {
  return (
    <svg width="140" height="80" viewBox="0 0 140 80" className="absolute top-[62px] right-[18px]" role="img" aria-label="View cube">
      <defs>
        <radialGradient id="shade"><stop offset="0" stopColor="#8a8a8a" /><stop offset="1" stopColor="#fff" stopOpacity="0" /></radialGradient>
        <linearGradient id="face" x2="0" y2="1"><stop offset="0" stopColor="#f4f4f4" /><stop offset="1" stopColor="#d0d0d0" /></linearGradient>
      </defs>
      <ellipse cx="68" cy="60" rx="67" ry="13" fill="#f4f4f4" stroke="#b8b8b8" strokeDasharray="4 2" />
      <ellipse cx="68" cy="59" rx="52" ry="9" fill="#fff" stroke="#c4c4c4" strokeDasharray="4 2" />
      <ellipse cx="68" cy="58" rx="46" ry="11" fill="url(#shade)" />
      <path d="M34 6h67v2L70 9z" fill="#f8f8f8" stroke="#999" />
      <path d="M34 6l36 3v51l-36-6z" fill="url(#face)" stroke="#999" />
      <path d="M101 6L70 9v51l31-7z" fill="url(#face)" stroke="#999" />
      <path d="M64 19l6 1 6-1v31l-6 1-6-1z" fill="#dbe4ea" opacity=".6" />
      <g fontSize="9" fontWeight="600" fill="#777" textAnchor="middle">
        <text x="51" y="36">FRONT</text>
        <text x="87" y="36">RIGHT</text>
      </g>
    </svg>
  )
}

function NavBar() {
  return (
    <div className="absolute top-[174px] right-0 flex h-[117px] w-9 flex-col items-center rounded-md border-2 border-[#bdbdbd] bg-[#f4f4f4]">
      <button aria-label="Close navigation bar" className="self-end"><Ico w={10}><circle cx="5" cy="5" r="4.500" fill="#aaa" stroke="none" /><path d="M3 3l4 4M7 3L3 7" stroke="#fff" strokeWidth="1" /></Ico></button>
      <button aria-label="Steering wheel" className="mt-2"><Ico w={24}><path d="M12 1h8q3 0 3 3v8a11 11 0 11-11-11z" fill="#eceef0" stroke="#999" strokeWidth="1.300" /><circle cx="12" cy="12" r="6" fill="#fafafa" stroke="#999" strokeWidth="1.200" /><path d="M7 17l-2 3M17 17l2 3" stroke="#aaa" strokeWidth="1" /></Ico></button>
      <Caret className="mt-1.5 opacity-60" />
      <span className="mt-1 h-px w-[26px] shrink-0 bg-[#b4b4b4]" />
      <button aria-label="Zoom" className="mt-2"><Ico w={18}><path d="M1 1h11v11H1z" fill="#b9d3a4" stroke="#8db16f" strokeWidth="1" /><circle cx="11" cy="11" r="3.500" fill="#fff" stroke="#999" strokeWidth="1.300" /><path d="M13 13l4 4" stroke="#999" strokeWidth="2" /></Ico></button>
      <Caret className="mt-2 opacity-60" />
      <button aria-label="Customize" className="mt-auto self-end"><Ico w={10}><circle cx="5" cy="5" r="4.500" fill="#aaa" stroke="none" /><path d="M3 4h4M3 6h4" stroke="#fff" strokeWidth="1" /></Ico></button>
    </div>
  )
}

const crop = <><path d="M2 15h4M15 1v4" stroke={B} strokeWidth="2.500" /><path d="M8 19V7h12" stroke="#666" strokeWidth="3" /></>

const VIEW_TOOLS = [
  ['Detail level', <><path d="M1 3h18v14H1z" fill="#e4e4e4" stroke="#555" strokeWidth="2" /><path d="M3 5h4v3H3zM13 5h4v3h-4zM7 8h6v4H7zM3 12h4v3H3zM13 12h4v3h-4z" fill="#888" stroke="none" /></>],
  ['Visual style', <path d="M1 7l6-5h11v11l-5 6H1zM1 7h12v12M13 7l5-5" fill="#f6f6f6" />],
  ['Sun path', <><circle cx="8" cy="8" r="4" fill="#f7a416" stroke="none" /><path d="M8 0v2M2 2l2 2M0 8h2M2 14l2-2M8 14v2M12 3l2-2" stroke="#f7a416" /><Bulb x={15} y={12} /></>],
  ['Shadows', <><circle cx="8" cy="8" r="6.500" fill="#ececec" stroke="#888" /><path d="M1 18h10" stroke="#aaa" strokeWidth="2.500" /><Bulb x={15} y={12} /></>],
  ['Rendering', <><path d="M4 6h11v4c0 4-2 5-5 5s-5-2-6-5L1 5M8 4l2-2M15 6l4-2v4l-4 4" /><Bulb x={15} y={12} /></>],
  ['Crop view', <>{crop}<path d="M12 12l8 8M20 12l-8 8" stroke="#f03030" strokeWidth="2.500" /></>],
  ['Crop region', <>{crop}<Bulb x={16} y={12} /></>],
  ['Lock view', <><path d="M1 10l9-8 9 8M4 9v10h5v-7h4" stroke="#666" strokeWidth="2" /><path d="M10 13h8v6h-8z" fill="#5cc6d0" stroke="#3aa9b4" /><path d="M16 13v-3h3" stroke="#3aa9b4" /></>],
  ['Temporary hide', <><circle cx="5" cy="13" r="3.500" /><circle cx="13" cy="13" r="3.500" /><path d="M2 11l5-5M10 11l6-5" /></>],
  ['Reveal hidden', <><circle cx="10" cy="7" r="5" fill="#5cc6d0" stroke="none" /><path d="M7 13h6v3l-3 2-3-2z" fill="#666" stroke="none" /></>],
  ['Temporary properties', <><path d="M2 2h10l3 3v3M2 2v12h5M5 5h6v6H5z" stroke="#888" /><path d="M9 10h8v8H9z" strokeDasharray="3 2" stroke="#777" /></>],
  ['Analytical model', <><path d="M1 4l5-3h12v10M1 4h12v12M1 4v14M6 4v14M1 9h12M13 4l5-3" stroke="#666" /><path d="M2 12h9M2 16h9M4 12v6M9 12v6" stroke="#e05050" /><Bulb x={15} y={12} c="#f8b63f" /></>],
  ['Displacement', <><path d="M7 6l3-3h7l-3 3zM15 8l3-3v8l-3 3z" fill="#6aaae0" stroke="#4c88bf" strokeWidth="1" /><path d="M5 9h7v7H5z" fill="#fff" stroke="#666" strokeWidth="2" /><path d="M2 8v9" stroke="#bbb" /></>],
  ['Constraints', <><path d="M1 1v18M18 1v8M1 4h17M4 2L1 4l3 2M15 2l3 2-3 2" stroke="#666" /><path d="M2 12h9" strokeDasharray="2 2" /><Bulb x={15} y={12} /></>],
]

function ViewArea() {
  return (
    <main className="flex min-w-0 flex-1 flex-col bg-white">
      <div className="flex h-[25px] items-center bg-[#cccccc] text-sm">
        <button className="flex h-full w-40 items-center gap-2.5 pl-1.5 text-left">
          <Ico w={20}><path d="M1 1h9v17H1zM10 3h9v16H10M3 5h5M3 8h5M3 11h5M3 14h5M12 9v8M15 9v8" stroke="#999" strokeWidth="1.400" fill="#e0e0e0" /></Ico>
          Level 2
        </button>
        <div className="flex h-full w-40 items-center bg-white pr-1.5 pl-1.5">
          <button className="flex flex-1 items-center gap-2.5 font-bold"><House size={20} />{'{3D}'}</button>
          <button aria-label="Close view"><Cross size={13} /></button>
        </div>
        <button className="flex h-full items-center gap-2.5 pl-1.5">
          <Ico w={20}><path d="M1 10l9-9 9 9z" fill="#999" stroke="none" /><path d="M5 10h10v9H5z" fill="#e0e0e0" stroke="#999" /></Ico>
          South
        </button>
        <button aria-label="Tab list" className="mr-[7px] ml-auto"><Ico w={11} h={10}><path d="M0 1h11" strokeWidth="2" /><path d="M0 4h11L5.500 9z" fill={G} stroke="none" /></Ico></button>
      </div>

      <div className="flex min-h-0 flex-1">
        <div className="relative min-w-0 flex-1 overflow-hidden">
          <Model />
          <ViewCube />
          <NavBar />
        </div>
        <div className="mt-0.5 flex w-[22px] flex-col items-center bg-[#e8e8e8]">
          <button aria-label="Scroll up" className="grid h-5 w-full place-items-center border-b border-[#d4d4d4] bg-[#efefef]"><Chevron d="M1 5l4-4 4 4" /></button>
          <span className="flex flex-1 items-center"><span className="h-[21px] w-[7px] rounded bg-[#cfcfcf]" /></span>
          <button aria-label="Scroll down" className="grid h-5 w-full place-items-center border-t border-[#d4d4d4] bg-[#efefef]"><Chevron /></button>
        </div>
        <div className="w-0.5 bg-[#eeeeee]" />
      </div>

      <div className="mb-0.5 flex h-[22px] items-center border-b border-[#c8c8c8] bg-[#f4f4f4] text-xs">
        <button className="w-[98px] shrink-0 pl-7 text-left">1 : 100</button>
        <div className="flex shrink-0 gap-2.5">
          {VIEW_TOOLS.map(([label, art]) => (
            <button key={label} aria-label={label}><Ico w={20}>{art}</Ico></button>
          ))}
        </div>
        <button aria-label="Scroll left" className="ml-1 grid h-full w-5 place-items-center bg-[#ececec]"><Chevron d="M7 -1L3 3l4 4" /></button>
        <span className="flex h-full flex-1 items-center justify-center border-x border-[#d4d4d4] bg-[#e8e8e8]"><span className="h-1.5 w-[21px] rounded-sm bg-[#cfcfcf]" /></span>
        <button aria-label="Scroll right" className="grid h-full w-5 place-items-center bg-[#ececec]"><Chevron d="M3 -1l4 4-4 4" /></button>
        <Ico w={24} h={20}><path d="M15 7h3v3h-3zM10 13h3v3h-3zM15 13h3v3h-3z" fill="#999" stroke="none" /></Ico>
      </div>
    </main>
  )
}

/* ---------- project browser ---------- */

const view = <><path d="M1 1h18v18H1z" stroke="#555" strokeWidth="2" strokeDasharray="4 1.500" /><path d="M4 4h12v12H4z" fill="#f2f2f2" stroke="#a8a8a8" strokeWidth="2" /></>

const TREE = [
  ['Structural Plans', ['Level 1', 'Level 1 - Analytical', 'Level 2', 'Level 2 - Analytical', 'Site']],
  ['3D Views', ['Analytical Model', '{3D}']],
  ['Elevations (Building Elevation)', ['East', 'North', 'South', 'West']],
]

const ROOTS = [
  ['Legends', 0, <><path d="M1 1h18v18H1z" fill="#eee" /><path d="M1 3h18" strokeWidth="4" /><path d="M4 9h3v2H4zM4 14h3v2H4zM9 9h7M9 11h7M9 14h7M9 16h7" /></>],
  ['Schedules/Quantities (all)', 1, <><path d="M1 3h18v14H1z" fill="#fff" /><path d="M1 4h18" strokeWidth="3" /><path d="M1 9h18M1 13h18M7 4v13M13 4v13" /></>],
  ['Sheets (all)', 0, <><path d="M1 4h11l6 8-3 6H1z" fill="#f0f0f0" stroke="#888" /><path d="M9 3l4-1 6 11c0 4-5 4-6 0z" fill="#e4e4e4" stroke="#777" /></>],
  ['Families', 1, <><path d="M1 1h8v9H1zM12 1h7v17H1v-5h11z" fill="#f0f0f0" stroke="#888" strokeWidth="1.800" /></>],
  ['Groups', 1, <><path d="M4 1H1v18h3M16 1h3v18h-3" stroke="#666" /><circle cx="8" cy="7" r="4" stroke="#888" /><path d="M8 9h7v8H8z" fill="#e4e4e4" stroke="#777" /></>],
  ['Revit Links', 0, <><path d="M9 12c-2-2-1-4 0-5l4-4c2-2 6 1 4 4l-3 4M11 8c2 2 1 4 0 5l-4 4c-2 2-6-1-4-4l3-4" stroke="#e88a3c" strokeWidth="1.800" /></>],
]

function Toggle({ plus }) {
  return (
    <button aria-label={plus ? 'Expand' : 'Collapse'} className="grid h-full w-[22px] shrink-0 place-items-center">
      <Ico w={10}><path d={plus ? 'M0 5h10M5 0v10' : 'M0 5h10'} strokeWidth="2.500" stroke="#777" /></Ico>
    </button>
  )
}

function Guide({ last, className }) {
  return (
    <span className={clsx('flex h-full shrink-0 flex-col', className)}>
      <span className="h-[13px] border-b border-l border-dashed border-[#bbb]" />
      <span className={clsx('flex-1 border-dashed border-[#bbb]', !last && 'border-l')} />
    </span>
  )
}

function Browser() {
  return (
    <aside className="flex w-[502px] shrink-0 flex-col border-l-3 border-[#c0c0c0] bg-white text-sm">
      <div className="flex h-5 items-center justify-between bg-[#d9d9d9] pl-1">
        <h2>Project Browser - Project1</h2>
        <button aria-label="Close browser"><Cross /></button>
      </div>
      <label className="mx-[11px] mt-2.5 flex h-8 items-center gap-2.5 border border-[#dedede] pl-2.5">
        <Ico w={20}><circle cx="8" cy="8" r="6.500" stroke="#888" strokeWidth="2" /><path d="M13 13l6 6" stroke="#888" strokeWidth="3" /></Ico>
        <input aria-label="Search" placeholder="Search" className="flex-1 pt-0.5 outline-none placeholder:text-[#a0a0a0]" />
      </label>
      <ul className="mt-[11px]">
        <li>
          <div className="flex h-[25px] items-center">
            <Toggle />
            <Ico w={20} className="mr-1.5 ml-1"><path d="M5 1H1v4M15 1h4v4M5 19H1v-4M15 19h4v-4" stroke="#666" /><path d="M5 8l4-3h7v7l-3 3H5z" fill="#ccc" /></Ico>
            Views (all)
          </div>
          <ul>
            {TREE.map(([group, views], g) => {
              const lastGroup = g === TREE.length - 1
              return (
                <li key={group}>
                  <div className="flex h-[25px] items-center pl-[11px]">
                    <Guide last={lastGroup} className="w-2.5" />
                    <Toggle />
                    <span className="pl-1">{group}</span>
                  </div>
                  <ul>
                    {views.map((name, i) => (
                      <li key={name} className={clsx('flex h-[25px] items-center pl-[11px]', name === 'South' && 'bg-[#f1f1f1] outline -outline-offset-1 outline-[#e0e0e0]')}>
                        <span className={clsx('h-full w-5 shrink-0 border-dashed border-[#bbb]', !lastGroup && 'border-l')} />
                        <Guide last={i === views.length - 1} className="w-[30px]" />
                        <Ico w={20} className="mr-1.5 ml-1.5">{view}</Ico>
                        <a href="#view" className={clsx(name === '{3D}' && 'font-bold')}>{name}</a>
                      </li>
                    ))}
                  </ul>
                </li>
              )
            })}
          </ul>
        </li>
        {ROOTS.map(([name, plus, art]) => (
          <li key={name} className="flex h-[25px] items-center">
            {plus ? <Toggle plus /> : <span className="w-[22px]" />}
            <Ico w={20} className="mr-1.5 ml-1">{art}</Ico>
            {name}
          </li>
        ))}
      </ul>
      <div className="mt-auto h-[3px] bg-[#eeeeee]" />
    </aside>
  )
}

/* ---------- status bar ---------- */

const arrow = <path d="M10 8l8 7-4 1 2 4-3 .500-1-4-2 3z" fill="#fff" stroke="#333" strokeWidth="1.200" />

const SELECT_TOOLS = [
  ['Select links', <><path d="M2 5c0-4 4-4 4 0s4 4 4 0M10 5c0-4 4-4 4 0s-4 4-4 0M6 5c0 4-4 4-4 0" stroke="#e88a3c" />{arrow}</>],
  ['Select underlay', <><path d="M1 9l5-5h9l-5 5zM1 14l5-5h9l-5 5zM1 18l4-4h8" fill="#4a9edc" stroke="#3a86c0" />{arrow}<path d="M12 1l6 6M18 1l-6 6" stroke="#f03030" strokeWidth="2.500" /></>],
  ['Select pinned', <><path d="M4 2h9M5 2l1 6-3 3h10l-2-3 1-6M8 11v6" />{arrow}</>],
  ['Select by face', <><path d="M3 5l7-4v14l-7 4z" fill="#4a9edc" stroke="#3a86c0" />{arrow}<path d="M12 1l6 6M18 1l-6 6" stroke="#f03030" strokeWidth="2.500" /></>],
  ['Drag elements', <><path d="M8 1v14M1 8h14M6 3l2-2 2 2M3 6L1 8l2 2M6 13l2 2 2-2" stroke="#444" />{arrow}</>],
  ['Background processes', <circle cx="10" cy="10" r="7" strokeDasharray="3 2.500" stroke="#bbb" strokeWidth="3" />],
]

function StatusBar() {
  return (
    <footer className="flex h-[31px] shrink-0 items-center border-b border-[#d8d8d8] bg-[#f4f4f4] pt-0.5 text-sm">
      <p className="flex-1 pl-0.5">Click to select, TAB for alternates, CTRL adds, SHIFT unselects.</p>
      <div className="flex w-[668px] items-center">
        <Ico w={20}><circle cx="7" cy="5" r="3" fill="#4a9edc" stroke="none" /><circle cx="14" cy="4" r="3" fill="#e89a4c" stroke="none" /><path d="M1 8h7v9l-6-3zM12 7h6l-2 8" fill="#4a9edc" stroke="none" /><path d="M7 8h6v10l-5 1z" fill="#46ad6a" stroke="#2f8a50" strokeWidth="1" /><path d="M13 18l6-6" stroke={B} strokeWidth="2.500" /></Ico>
        <div className="ml-1.5 flex h-7 w-[260px] items-center border-b border-[#d0d0d0] pr-1.5">
          <select aria-label="Active workset" className="h-6 flex-1 appearance-none bg-transparent"><option></option></select>
          <Chevron />
        </div>
        <span className="ml-1.5 flex w-[59px] items-center text-[#999]">
          <Ico w={18} h={20}><circle cx="6" cy="10" r="3" /><path d="M1 19c0-6 10-6 10 0zM9 1h8v6h-4l-3 2z" stroke="#999" /></Ico>:0
        </span>
        <button aria-label="Design options"><Ico w={20}><path d="M1 1h18v18H1z" fill="#eee" stroke="#555" /><path d="M1 3h18" stroke="#555" strokeWidth="4" /><path d="M4 9h2M4 12h2M4 15h2M8 9h8M8 12h8M8 15h8" stroke="#555" /></Ico></button>
        <button aria-label="Add to set" className="ml-2.5"><Ico w={20}><path d="M1 1h18v12M1 1v15h5" stroke="#999" /><path d="M1 3h18" stroke="#999" strokeWidth="4" /><path d="M4 8h2M4 11h2M8 8h8M8 11h8M6 16h7M10 13l4 3-4 3" stroke="#999" /></Ico></button>
        <div className="ml-1.5 flex h-7 w-[260px] items-center border-b border-[#d0d0d0] pr-1.5 text-[#a0a0a0]">
          <select aria-label="Design option" className="flex-1 appearance-none bg-transparent pl-1"><option>Main Model</option></select>
          <Chevron />
        </div>
      </div>
      <div className="ml-[276px] flex w-[288px] items-center gap-2.5">
        {SELECT_TOOLS.map(([label, art]) => (
          <button key={label} aria-label={label}><Ico w={20}>{art}</Ico></button>
        ))}
        <button className="flex items-center text-[#1f3a8a]">
          <Ico w={20}><path d="M1 2h18l-7 8v9l-4-2v-7z" fill="#e8e8e8" stroke="#555" /></Ico>:0
        </button>
      </div>
    </footer>
  )
}

export default function App() {
  return (
    <div className="flex h-screen flex-col overflow-hidden bg-[#f4f4f4] font-['Open_Sans','Noto_Sans',sans-serif] text-[#3c3c3c]">
      <TitleBar />
      <Ribbon />
      <div className="flex min-h-0 flex-1">
        <Properties />
        <ViewArea />
        <Browser />
      </div>
      <StatusBar />
    </div>
  )
}
